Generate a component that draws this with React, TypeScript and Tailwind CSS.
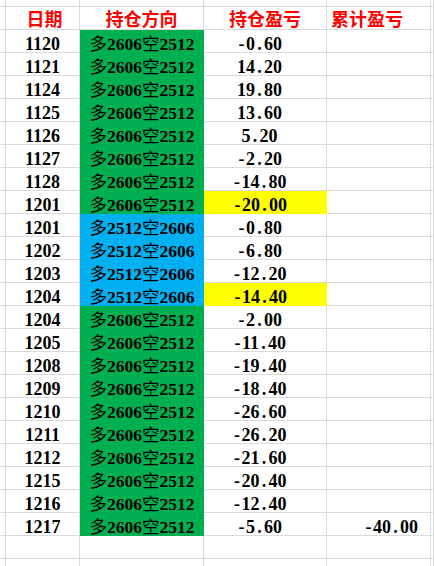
import React from "react";

type Row = { d: string; dir: "g" | "b"; v: string; hl?: boolean; cum?: string };

const rows: Row[] = [
  { d: "1120", dir: "g", v: "-0.60" },
  { d: "1121", dir: "g", v: "14.20" },
  { d: "1124", dir: "g", v: "19.80" },
  { d: "1125", dir: "g", v: "13.60" },
  { d: "1126", dir: "g", v: "5.20" },
  { d: "1127", dir: "g", v: "-2.20" },
  { d: "1128", dir: "g", v: "-14.80" },
  { d: "1201", dir: "g", v: "-20.00", hl: true },
  { d: "1201", dir: "b", v: "-0.80" },
  { d: "1202", dir: "b", v: "-6.80" },
  { d: "1203", dir: "b", v: "-12.20" },
  { d: "1204", dir: "b", v: "-14.40", hl: true },
  { d: "1204", dir: "g", v: "-2.00" },
  { d: "1205", dir: "g", v: "-11.40" },
  { d: "1208", dir: "g", v: "-19.40" },
  { d: "1209", dir: "g", v: "-18.40" },
  { d: "1210", dir: "g", v: "-26.60" },
  { d: "1211", dir: "g", v: "-26.20" },
  { d: "1212", dir: "g", v: "-21.60" },
  { d: "1215", dir: "g", v: "-20.40" },
  { d: "1216", dir: "g", v: "-12.40" },
  { d: "1217", dir: "g", v: "-5.60", cum: "-40.00" },
];

const font = { fontFamily: '"Liberation Serif", "Noto Sans CJK SC", serif' };
const line = "border-r border-b border-[#dadada]";

function Num({ s }: { s: string }) {
  return (
    <>
      {s.split("").map((c, i) =>
        c === "-" || c === "." ? (
          <span key={i} className="inline-block w-[0.5em] text-center">
            {c}
          </span>
        ) : (
          <React.Fragment key={i}>{c}</React.Fragment>
        )
      )}
    </>
  );
}

function Dir({ dir }: { dir: "g" | "b" }) {
  const a = dir === "g" ? "2606" : "2512";
  const b = dir === "g" ? "2512" : "2606";
  return (
    <>
      <span className="font-normal">多</span>
      {a}
      <span className="font-normal">空</span>
      {b}
    </>
  );
}

export default function App() {
  return (
    <div
      className="w-[434px] h-[566px] overflow-hidden bg-white text-black"
      style={font}
    >
      {/* top partial row */}
      <div className="flex h-[7px]">
        <div className={`w-[6px] shrink-0 ${line}`} />
        <div className={`w-[74px] shrink-0 ${line}`} />
        <div className={`w-[124px] shrink-0 ${line}`} />
        <div className={`w-[123px] shrink-0 ${line}`} />
        <div className={`w-[104px] shrink-0 ${line}`} />
        <div className={`flex-1 ${line}`} />
      </div>
      {/* header */}
      <div
        className="flex h-[23px] text-[18px] leading-[16px] font-bold text-[#ff0000]"
        style={{ fontFamily: '"Noto Sans CJK SC", sans-serif' }}
      >
        <div className={`w-[6px] shrink-0 ${line}`} />
        <div className={`w-[74px] shrink-0 pt-[3px] pl-[4px] text-center ${line}`}>日期</div>
        <div className={`w-[124px] shrink-0 pt-[3px] text-center ${line}`}>持仓方向</div>
        <div className={`w-[123px] shrink-0 pt-[3px] text-center ${line}`}>持仓盈亏</div>
        <div className={`w-[104px] shrink-0 pt-[3px] pl-[4px] text-left ${line}`}>累计盈亏</div>
        <div className={`flex-1 ${line}`} />
      </div>
      {/* data rows */}
      {rows.map((r, i) => (
        <div key={i} className="flex h-[23px] leading-[16px] font-bold whitespace-nowrap">
          <div className={`w-[6px] shrink-0 ${line}`} />
          <div className={`w-[74px] shrink-0 pt-[6px] text-center text-[18px] ${line}`}>{r.d}</div>
          <div
            className={`w-[124px] shrink-0 pt-[6px] text-center text-[17.5px] ${
              r.dir === "g" ? "bg-[#00b050]" : "bg-[#00b0f0]"
            }`}
          >
            <Dir dir={r.dir} />
          </div>
          <div
            className={`w-[123px] shrink-0 pt-[6px] pr-[11px] text-center text-[18px] ${
              r.hl ? "bg-[#ffff00]" : line
            }`}
          >
            <Num s={r.v} />
          </div>
          <div className={`w-[104px] shrink-0 pt-[6px] pr-[12px] text-right text-[18px] ${line}`}>
            {r.cum ? <Num s={r.cum} /> : null}
          </div>
          <div className={`flex-1 ${line}`} />
        </div>
      ))}
      {/* empty rows */}
      {[0, 1].map((k) => (
        <div key={k} className="flex h-[23px]">
          <div className={`w-[6px] shrink-0 ${line}`} />
          <div className={`w-[74px] shrink-0 ${line}`} />
          <div className={`w-[124px] shrink-0 ${line}`} />
          <div className={`w-[123px] shrink-0 ${line}`} />
          <div className={`w-[104px] shrink-0 ${line}`} />
          <div className={`flex-1 ${line}`} />
        </div>
      ))}
    </div>
  );
}
